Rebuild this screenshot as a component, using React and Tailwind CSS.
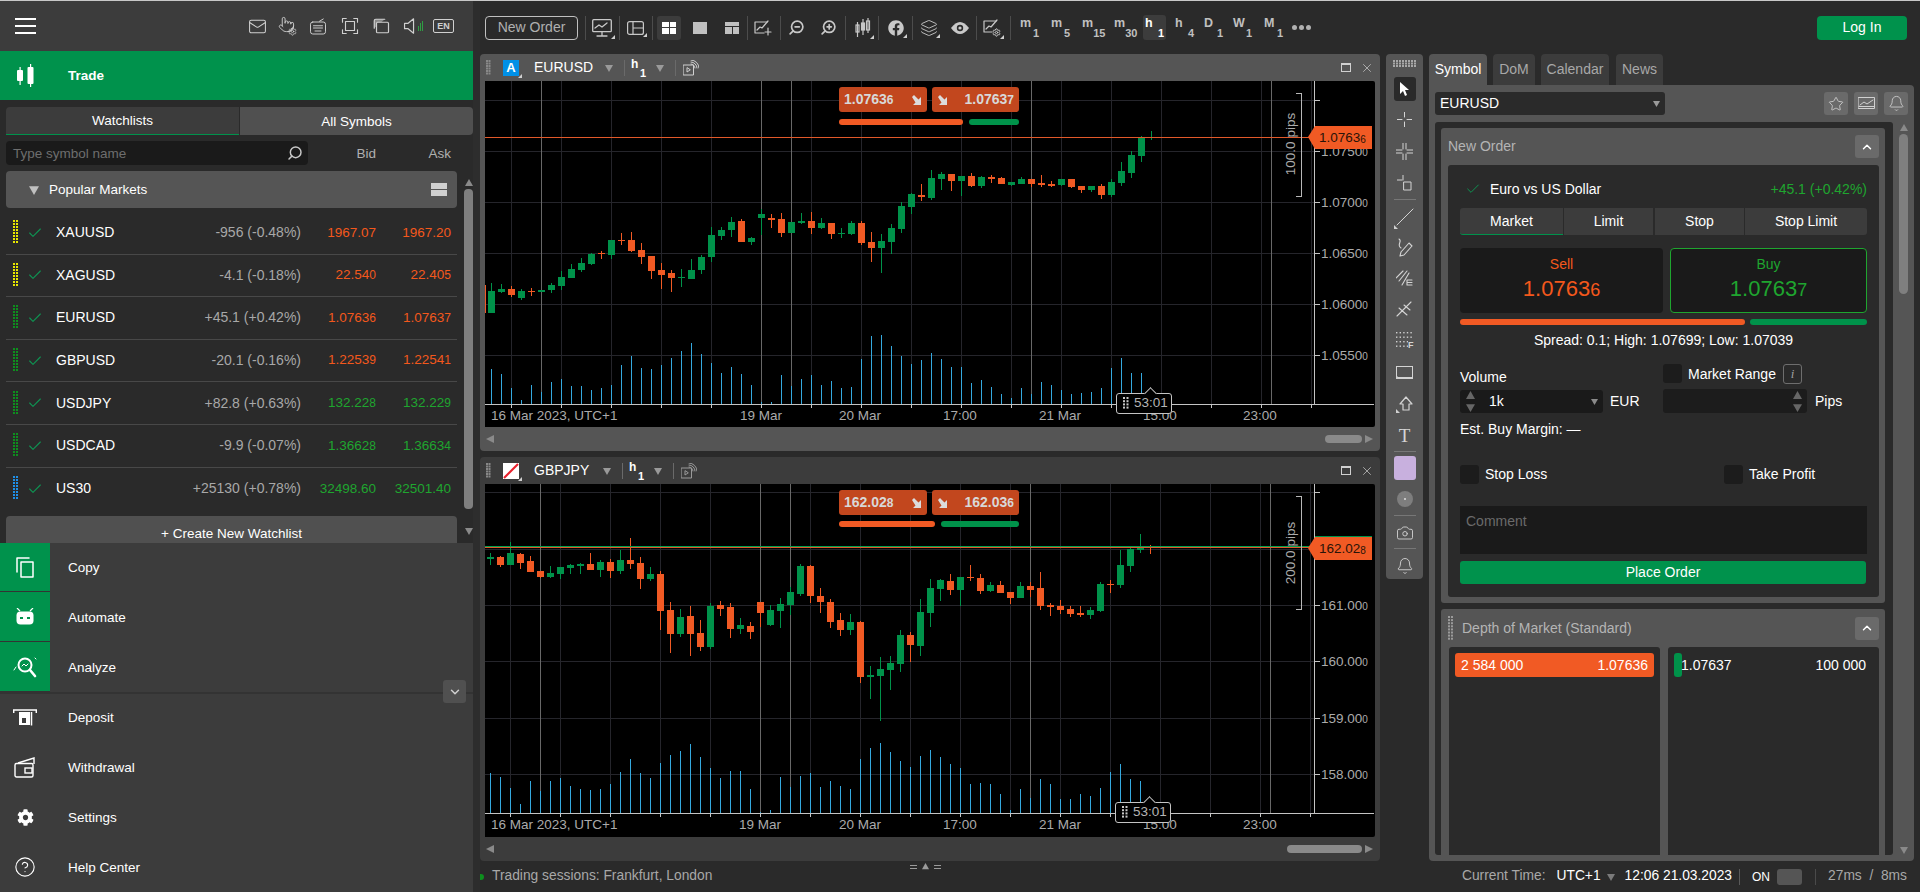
import React from "react";
import { Mail, Pointer, Settings, Search, ZoomIn, ZoomOut, Layers, Star, Bell, Camera, Check, ChevronUp, ChevronDown, CircleHelp, X } from "lucide-react";
import { FaFacebook, FaCog } from "react-icons/fa";

// watchlist rows
const rows = [
  { name: "XAUUSD", chg: "-956 (-0.48%)", bid: "1967.07", ask: "1967.20", dot: "#e6e600", up: false, plain: true },
  { name: "XAGUSD", chg: "-4.1 (-0.18%)", bid: "22.540", ask: "22.405", dot: "#e6e600", up: false },
  { name: "EURUSD", chg: "+45.1 (+0.42%)", bid: "1.07636", ask: "1.07637", dot: "#0e8f1e", up: false },
  { name: "GBPUSD", chg: "-20.1 (-0.16%)", bid: "1.22539", ask: "1.22541", dot: "#0e8f1e", up: false },
  { name: "USDJPY", chg: "+82.8 (+0.63%)", bid: "132.228", ask: "132.229", dot: "#0e8f1e", up: true },
  { name: "USDCAD", chg: "-9.9 (-0.07%)", bid: "1.36628", ask: "1.36634", dot: "#0e8f1e", up: true },
  { name: "US30", chg: "+25130 (+0.78%)", bid: "32498.60", ask: "32501.40", dot: "#1f8fe6", up: true, plain: true },
];

// candles: body top, body bottom, wick top, wick bottom, 1 = green (zoomed reference units)
const candlesA = [
  [723,789,699,789,1],[717,726,702,729,1],[717,735,708,741,0],[723,744,717,750,1],[723,726,714,738,0],[720,726,720,726,1],
  [705,720,699,729,1],[681,708,663,720,1],[657,684,642,684,1],[639,660,624,666,1],[612,642,609,645,1],[609,612,603,627,0],
  [570,615,570,627,1],[570,573,549,585,0],[570,603,546,606,0],[600,621,579,642,0],[618,663,618,687,0],[660,675,639,717,0],
  [669,684,660,726,0],[681,684,657,711,1],[660,687,627,687,1],[621,660,615,672,1],[555,621,531,636,1],[540,558,531,570,1],
  [516,540,501,561,1],[513,576,507,576,0],[564,576,561,585,1],[492,504,477,555,1],[504,510,492,534,0],[507,549,489,561,0],
  [516,549,516,549,1],[513,519,489,522,1],[513,534,486,552,0],[519,534,504,537,1],[519,552,519,567,0],[549,552,534,564,1],
  [519,552,513,555,1],[519,579,513,585,0],[576,594,546,636,0],[573,594,552,669,1],[534,576,522,612,1],[468,537,456,549,1],
  [432,471,429,492,1],[435,441,402,453,0],[384,444,360,450,1],[372,387,366,420,1],[372,393,372,423,0],[378,393,378,438,1],
  [378,408,369,411,0],[381,408,378,414,1],[381,387,375,399,0],[384,402,381,402,0],[396,405,396,408,1],[387,402,381,402,1],
  [387,402,387,411,0],[399,405,375,411,0],[402,408,393,411,0],[387,405,387,408,1],[387,411,387,414,0],[408,420,408,429,0],
  [408,420,408,426,1],[408,435,402,447,0],[396,435,387,441,1],[363,399,336,408,1],[315,369,303,384,1],[264,318,258,336,1],[243,243,243,270,1],
];
const volsA = [957,972,1014,1050,1005,1026,996,987,1008,1008,1020,1014,1005,945,918,954,957,945,924,903,879,912,939,969,951,972,1005,1056,1056,975,1008,987,975,1005,993,1014,1011,927,858,855,888,918,942,930,909,927,951,951,999,990,1011,1032,1044,1014,1032,996,1005,1020,1032,1029,1026,1014,954,924,969,969];

const candlesB = [
  [324,330,312,348,1],[324,348,321,354,0],[312,348,279,348,1],[315,342,312,360,0],[336,369,321,369,0],[366,384,366,387,0],
  [372,384,351,387,1],[354,375,354,390,1],[348,357,345,375,1],[345,351,342,375,1],[345,363,312,363,0],[339,363,333,384,1],
  [339,366,330,387,0],[333,366,303,375,1],[333,345,267,360,0],[342,390,324,420,0],[375,390,354,396,1],[375,486,366,543,0],
  [483,555,459,612,0],[504,555,480,564,1],[501,555,471,621,0],[552,594,513,606,0],[471,594,462,600,1],[468,480,456,501,0],
  [474,540,462,567,0],[528,540,507,555,1],[531,549,519,570,0],[459,492,459,534,0],[483,528,468,531,1],[465,486,447,537,1],
  [429,468,414,498,1],[351,435,345,441,1],[351,441,348,462,0],[441,459,417,492,0],[459,519,450,537,0],[513,543,492,561,0],
  [519,543,495,558,1],[519,684,516,702,0],[678,684,651,750,1],[660,681,624,816,1],[642,663,621,723,1],[558,645,543,669,1],
  [558,588,549,639,0],[489,591,450,621,1],[417,492,390,534,1],[393,420,390,456,1],[396,423,375,438,0],[384,423,384,471,1],
  [384,387,348,396,0],[387,426,375,435,0],[408,426,399,429,1],[408,432,396,432,0],[429,447,429,465,0],[411,447,399,447,1],
  [411,423,399,444,0],[417,471,369,483,0],[468,474,462,501,0],[471,483,453,495,0],[480,495,471,504,0],[492,498,471,504,0],
  [483,498,474,510,1],[405,486,399,489,1],[405,408,393,432,0],[348,408,303,417,1],[300,351,297,369,1],[297,303,255,312,1],[291,294,288,315,0],
];
const volsB = [972,984,1017,1065,996,1026,996,987,1011,1020,1023,1020,1005,969,930,972,987,942,918,906,885,924,957,987,966,966,1020,1089,1083,984,1014,981,972,1014,996,1011,1020,930,897,882,909,936,954,921,903,924,945,957,1005,1002,1005,1035,1083,1020,1047,990,1005,1050,1050,1035,1041,1017,969,945,990,996];

const Px = ({ v, small = "text-[12px]" }) => (
  <>
    {v.slice(0, -1)}
    <span className={small}>{v.slice(-1)}</span>
  </>
);

const Tri = ({ dir = "down", size = 8, color = "#8a8a8a", className = "" }) => {
  const pts = { down: "0,1 8,1 4,8", up: "0,7 8,7 4,0", left: "8,0 8,8 0,4", right: "0,0 0,8 8,4" };
  return (
    <svg width={size} height={size} viewBox="0 0 8 8" className={className}>
      <polygon points={pts[dir]} fill={color} />
    </svg>
  );
};

const Corner = () => (
  <svg width="4" height="4" viewBox="0 0 4 4" className="absolute right-[-3px] bottom-[-2px]">
    <polygon points="4,0 4,4 0,4" fill="#d0d0d0" />
  </svg>
);

const CornerL = () => (
  <svg width="4" height="4" viewBox="0 0 4 4" className="absolute left-[-1px] bottom-[-2px]">
    <polygon points="0,0 4,4 0,4" fill="#d0d0d0" />
  </svg>
);

const Sep = ({ className = "" }) => <div className={"w-px h-6 bg-[#4c4c4c] shrink-0 " + className} />;

const Draw = ({ w = 18, h = 18, vb = "0 0 24 24", sw = 1.5, className = "", children }) => (
  <svg width={w} height={h} viewBox={vb} fill="none" stroke="currentColor" strokeWidth={sw} strokeLinecap="round" strokeLinejoin="round" className={className}>
    {children}
  </svg>
);

const Dots = ({ color = "#8f8f8f", cols = 2, rows = 8, w = 6, h = 25, s = 2, gx = 3, gy = 3 }) => (
  <svg width={w} height={h} className="shrink-0">
    {Array.from({ length: rows }).map((_, r) =>
      Array.from({ length: cols }).map((_, c) => <rect key={r + "-" + c} x={c * gx} y={r * gy} width={s} height={s} fill={color} />)
    )}
  </svg>
);

const CandleIcon = ({ className = "" }) => (
  <svg width="17" height="23" viewBox="0 0 17 23" className={className} fill="currentColor">
    <rect x="0" y="6" width="6" height="11" rx="1" />
    <rect x="2.500" y="3" width="1.200" height="18" />
    <rect x="10.500" y="3" width="6" height="17" rx="1" />
    <rect x="13" y="0" width="1.200" height="23" />
  </svg>
);

function MenuRow({ label, green, children, h = "h-[50px]" }) {
  return (
    <div className={"flex items-center " + h}>
      <div className={"w-[50px] h-full flex items-center justify-center text-white " + (green ? "bg-[#00924c] border-b border-[#333]" : "")}>{children}</div>
      <span className="ml-[18px] mt-[2px] text-white text-[13.5px]">{label}</span>
    </div>
  );
}

function Sidebar() {
  return (
    <div className="w-[480px] shrink-0 flex bg-[#2d2d2d]">
      <div className="w-[473px] flex flex-col">
        <div className="h-[50px] bg-[#3c3c3c] flex items-center text-[#d0d0d0]">
          <div className="ml-[15px] w-[21px] flex flex-col gap-[5px]">
            <div className="h-[2px] bg-white" />
            <div className="h-[2px] bg-white" />
            <div className="h-[2px] bg-white" />
          </div>
          <Mail size={19} strokeWidth={1.3} className="ml-[212px]" />
          <div className="relative ml-[11px] w-[19px] h-[20px]">
            <Pointer size={17} strokeWidth={1.3} />
            <Settings size={9} strokeWidth={2} className="absolute right-0 bottom-0" />
          </div>
          <Draw w={18} h={19} className="ml-[12px]" sw={1.3}>
            <rect x="2" y="6" width="20" height="16" rx="3" />
            <path d="M6 11h12M6 14h12M8 18h8M14 5l5-3" />
          </Draw>
          <Draw w={18} h={18} className="ml-[14px]" sw={1.5}>
            <path d="M2 7V2h5M17 2h5v5M22 17v5h-5M7 22H2v-5" />
            <rect x="6" y="6" width="12" height="12" />
          </Draw>
          <Draw w={18} h={18} className="ml-[13px]" sw={1.6}>
            <path d="M3 15V5a2 2 0 0 1 2-2h12" fill="#888" />
            <rect x="6" y="7" width="16" height="14" rx="1.500" fill="#3c3c3c" />
          </Draw>
          <div className="ml-[13px] flex items-center">
            <Draw w={13} h={18} vb="0 0 13 20" sw={1.3}>
              <path d="M1 7h4l6-5v16l-6-5H1z" />
            </Draw>
            <div className="ml-[2px] flex items-end gap-px h-[10px]">
              <div className="w-px h-[5px] bg-[#2f9e44]" />
              <div className="w-px h-[8px] bg-[#2f9e44]" />
              <div className="w-px h-[10px] bg-[#2f9e44]" />
            </div>
          </div>
          <div className="ml-[10px] w-[21px] h-[14px] border border-[#d0d0d0] rounded-[2px] text-[9px] font-bold leading-none flex items-center justify-center">EN</div>
        </div>

        <div className="h-[49px] bg-[#00924c] flex items-center text-white">
          <CandleIcon className="ml-[17px]" />
          <span className="ml-[34px] mt-[2px] font-bold text-[13.5px]">Trade</span>
        </div>

        <div className="flex-1 bg-[#2a2a2a] overflow-hidden min-h-0 flex flex-col">
          <div className="ml-[6px] mt-[7px] flex h-[28px] text-[13.5px] text-white">
            <div className="w-[233px] pt-[2px] bg-[#3c3c3c] border-b border-[#00924c] rounded-tl-[4px] flex items-center justify-center">Watchlists</div>
            <div className="ml-[1px] pt-[2px] flex-1 bg-[#505050] rounded-r-[4px] flex items-center justify-center">All Symbols</div>
          </div>
          <div className="ml-[6px] mt-[6px] h-[24px] flex items-center text-[13.5px]">
            <div className="w-[302px] h-full bg-[#1a1a1a] rounded-[4px] flex items-center justify-between pl-[7px] pr-[5px]">
              <span className="text-[#6e6e6e] mt-[2px]">Type symbol name</span>
              <Search size={16} strokeWidth={2.2} className="text-[#c8c8c8] -scale-x-100" />
            </div>
            <span className="w-[68px] mt-[2px] text-right text-[#b0b0b0]">Bid</span>
            <span className="w-[75px] mt-[2px] text-right text-[#b0b0b0]">Ask</span>
          </div>
          <div className="ml-[6px] mt-[6px] flex flex-1 min-h-0">
            <div className="w-[451px] flex flex-col">
              <div className="h-[37px] shrink-0 bg-[#555] rounded-[4px] flex items-center text-white text-[13.5px]">
                <Tri size={10} color="#c0c0c0" className="ml-[23px]" />
                <span className="ml-[10px] mt-[2px]">Popular Markets</span>
                <div className="ml-auto mr-[10px] w-[16px] flex flex-col gap-px">
                  <div className="h-[6px] bg-[#d0d0d0]" />
                  <div className="h-[6px] bg-[#d0d0d0]" />
                </div>
              </div>
              <div className="mt-[4px]">
                {rows.map((r, i) => (
                  <div key={r.name} className={"h-[42.6px] flex items-center text-[13.5px] " + (i < rows.length - 1 ? "border-b border-[#484848]" : "")}>
                    <div className="ml-[7px]">
                      <Dots color={r.dot} />
                    </div>
                    <Check size={16} strokeWidth={1.7} className="ml-[8px] text-[#0f9252]" />
                    <span className="ml-[13px] text-white text-[14px]">{r.name}</span>
                    <span className="ml-auto text-[#a8a8a8] text-[14px]">{r.chg}</span>
                    <span className={"w-[75px] text-right " + (r.up ? "text-[#1fa52f]" : "text-[#f4581c]")}>{r.plain ? r.bid : <Px v={r.bid} />}</span>
                    <span className={"w-[75px] mr-[6px] text-right " + (r.up ? "text-[#1fa52f]" : "text-[#f4581c]")}>{r.plain ? r.ask : <Px v={r.ask} />}</span>
                  </div>
                ))}
              </div>
              <div className="mt-[6px] h-[30px] shrink-0 bg-[#505050] rounded-t-[4px] flex items-start pt-[8px] justify-center text-white text-[13.5px]">+ Create New Watchlist</div>
            </div>
            <div className="ml-[7px] w-[9px] flex flex-col items-center">
              <Tri dir="up" size={8} className="mt-[8px]" />
              <div className="mt-[2px] h-[320px] w-[9px] rounded-[4px] bg-[#7f7f7f]" />
              <Tri size={8} className="mt-[18px]" />
            </div>
          </div>
        </div>

        <div className="h-[349px] bg-[#3c3c3c] relative">
          <MenuRow label="Copy" green h="h-[49px]">
            <Draw w={18} h={21} vb="0 0 18 21" sw={1.5}>
              <path d="M1 15V1h12" />
              <rect x="5" y="5" width="12" height="15" />
            </Draw>
          </MenuRow>
          <MenuRow label="Automate" green>
            <svg width="18" height="17" viewBox="0 0 18 17" fill="currentColor">
              <path d="M1 0l3 3M17 0l-3 3" stroke="currentColor" strokeWidth="1.200" />
              <rect x="0.500" y="3.500" width="17" height="13" rx="4" />
              <rect x="4" y="9" width="3" height="2" fill="#00924c" />
              <rect x="11" y="9" width="3" height="2" fill="#00924c" />
            </svg>
          </MenuRow>
          <MenuRow label="Analyze" green>
            <Draw w={24} h={22} vb="0 0 24 22" sw={2}>
              <circle cx="12" cy="9" r="6.500" />
              <path d="M17 14l5 6" strokeWidth="2.600" />
              <path d="M9 10l2-2 2 2 2-2" strokeWidth="1" />
              <path d="M1 14l2-3M22 2l1 1" strokeWidth="1" />
            </Draw>
          </MenuRow>
          <div className="h-[2px] bg-[#333] -mb-[2px]" />
          <MenuRow label="Deposit">
            <svg width="24" height="17" viewBox="0 0 24 17" fill="none" stroke="currentColor" strokeWidth="1.500">
              <path d="M0.700 4V1h22.600v3" />
              <rect x="6" y="3" width="11" height="13" fill="currentColor" stroke="none" />
              <rect x="9" y="9" width="4" height="5" fill="#3c3c3c" stroke="none" />
              <path d="M18.500 3v13.500" />
            </svg>
          </MenuRow>
          <MenuRow label="Withdrawal">
            <svg width="22" height="22" viewBox="0 0 22 22" fill="none" stroke="currentColor" strokeWidth="1.400">
              <rect x="1" y="7.500" width="18" height="13.500" rx="1.500" />
              <rect x="11" y="12" width="7" height="5" />
              <path d="M4 7l16-5v6" />
            </svg>
          </MenuRow>
          <MenuRow label="Settings">
            <FaCog size={17} />
          </MenuRow>
          <MenuRow label="Help Center">
            <CircleHelp size={22} strokeWidth={1.2} />
          </MenuRow>
          <div className="absolute left-[443px] top-[137px] w-[23px] h-[23px] rounded-[3px] bg-[#505050] flex items-center justify-center text-[#d0d0d0]">
            <ChevronDown size={14} strokeWidth={2.5} />
          </div>
        </div>
      </div>
    </div>
  );
}

function TF({ a, b, ml, active }) {
  return (
    <div className={"w-[23px] h-[25px] rounded-[3px] px-[2px] flex justify-between font-bold text-[#c0c0c0] " + ml + (active ? " bg-[#3c3c3c]" : "")}>
      <span className={"text-[12.5px] leading-[17px] " + (active ? "text-white" : "")}>{a}</span>
      <span className={"self-end text-[11px] leading-[14px] " + (active ? "text-white" : "")}>{b}</span>
    </div>
  );
}

function Toolbar() {
  return (
    <div className="h-[53px] shrink-0 flex items-center text-[#c8c8c8]">
      <div className="ml-[5px] w-[93px] h-[24px] border border-[#c0c0c0] rounded-[4px] flex items-center justify-center text-[14px] text-[#b0b0b0]">New Order</div>
      <Sep className="ml-[7px]" />
      <div className="relative ml-[6px] w-[20px] h-[18px]">
        <Draw w={20} h={18} vb="0 0 20 18" sw={1.3}>
          <rect x="0.700" y="0.700" width="18.600" height="12" rx="1" />
          <path d="M3 9l4-3 3 2 5-4M10 13v3M5 17h10" />
        </Draw>
        <Corner />
      </div>
      <Sep className="ml-[7px]" />
      <div className="relative ml-[7px] w-[17px] h-[14px]">
        <Draw w={17} h={14} vb="0 0 17 14" sw={1.2}>
          <rect x="0.600" y="0.600" width="15.800" height="12.800" rx="2" />
          <path d="M6 1v12M6 7h10" />
        </Draw>
        <Corner />
      </div>
      <Sep className="ml-[8px]" />
      <div className="ml-[4px] w-[24px] h-[24px] rounded-[3px] bg-[#3c3c3c] flex items-center justify-center">
        <div className="w-[14px] h-[12px] grid grid-cols-2 grid-rows-2 gap-px">
          <div className="bg-white" />
          <div className="bg-white" />
          <div className="bg-white" />
          <div className="bg-white" />
        </div>
      </div>
      <div className="ml-[12px] w-[14px] h-[12px] bg-[#c0c0c0]" />
      <div className="ml-[18px] w-[14px] h-[12px] flex flex-col gap-px">
        <div className="h-[4px] bg-[#c0c0c0]" />
        <div className="flex-1 flex gap-px">
          <div className="flex-1 bg-[#c0c0c0]" />
          <div className="flex-1 bg-[#c0c0c0]" />
        </div>
      </div>
      <Sep className="ml-[8px]" />
      <Draw w={18} h={18} vb="0 0 18 18" sw={1.2} className="ml-[6px]">
        <path d="M10 14H1V3h12" />
        <path d="M3 11l3-3 2 1 6-7" />
        <path d="M14 9v7M11 13h6" />
      </Draw>
      <Sep className="ml-[8px]" />
      <ZoomOut size={17} strokeWidth={2.4} className="ml-[7px] -scale-x-100" />
      <ZoomIn size={17} strokeWidth={2.4} className="ml-[15px] -scale-x-100" />
      <Sep className="ml-[8px]" />
      <div className="relative ml-[9px] w-[16px] h-[19px]">
        <svg width="16" height="19" viewBox="0 0 16 19" fill="none" stroke="currentColor" strokeWidth="1.200">
          <rect x="1" y="7" width="3" height="7" fill="#2a2a2a" />
          <path d="M2.500 4v16" />
          <rect x="6.500" y="5" width="3" height="7" fill="currentColor" />
          <path d="M8 1v16" />
          <rect x="11.500" y="3" width="3" height="9" />
          <path d="M13 0v15" />
        </svg>
        <Corner />
      </div>
      <Sep className="ml-[7px]" />
      <div className="relative ml-[9px] w-[16px] h-[16px]">
        <FaFacebook size={16} />
        <Corner />
      </div>
      <Sep className="ml-[8px]" />
      <div className="relative ml-[7px] w-[17px] h-[17px]">
        <Layers size={18} strokeWidth={1.2} />
        <Corner />
      </div>
      <svg width="18" height="12" viewBox="0 0 18 12" className="ml-[14px]">
        <path d="M0 6c3-4 6-6 9-6s6 2 9 6c-3 4-6 6-9 6s-6-2-9-6z" fill="#c8c8c8" />
        <circle cx="9" cy="6" r="3.200" fill="#2a2a2a" />
        <circle cx="9" cy="6" r="1.600" fill="#c8c8c8" />
      </svg>
      <Sep className="ml-[7px]" />
      <div className="relative ml-[6px] w-[18px] h-[18px]">
        <Draw w={18} h={18} vb="0 0 18 18" sw={1.2}>
          <path d="M9 13H1V2h12" />
          <path d="M3 10l3-3 2 1 6-7" />
        </Draw>
        <Settings size={9} strokeWidth={2.6} className="absolute right-0 bottom-0" />
        <Corner />
      </div>
      <Sep className="ml-[9px]" />
      <TF a="m" b="1" ml="ml-[7px]" />
      <TF a="m" b="5" ml="ml-[8px]" />
      <TF a="m" b="15" ml="ml-[8px]" />
      <TF a="m" b="30" ml="ml-[9px]" />
      <TF a="h" b="1" ml="ml-[8px]" active />
      <TF a="h" b="4" ml="ml-[7px]" />
      <TF a="D" b="1" ml="ml-[6px]" />
      <TF a="W" b="1" ml="ml-[6px]" />
      <TF a="M" b="1" ml="ml-[8px]" />
      <div className="ml-[7px] flex gap-[2px]">
        <div className="w-[5px] h-[5px] rounded-full bg-[#b0b0b0]" />
        <div className="w-[5px] h-[5px] rounded-full bg-[#b0b0b0]" />
        <div className="w-[5px] h-[5px] rounded-full bg-[#b0b0b0]" />
      </div>
      <div className="ml-auto mr-[13px] w-[90px] h-[24px] rounded-[4px] bg-[#00924c] text-white text-[14px] flex items-center justify-center">Log In</div>
    </div>
  );
}

const GRID = "#25252b";
const AXIS = "#c4c4c4";
const GREEN = "#00924a";
const ORANGE = "#f15a24";

function Plot({ cfg }) {
  const { candles, vols, x0, dy, hLines, vStart, sessions, priceY, tagText, tagSmall, labels, xLabels, axisY, bracket, pips, lines, h } = cfg;
  const vGrid = Array.from({ length: 17 }, (_, i) => vStart + i * 50);
  return (
    <svg width="889" height={h} className="block" shapeRendering="crispEdges">
      {hLines.map((y) => (
        <rect key={y} x="0" y={y} width="835" height="1" fill={GRID} />
      ))}
      {vGrid.map((x) => (
        <g key={x}>
          <rect x={x} y="0" width="1" height={axisY} fill={GRID} />
          <rect x={x} y={axisY} width="1" height="4" fill={AXIS} />
        </g>
      ))}
      {sessions.map((x) => (
        <rect key={x} x={x} y="0" width="1" height={axisY} fill="#686868" />
      ))}
      {hLines.map((y) => (
        <rect key={y} x="829" y={y} width="6" height="1" fill={AXIS} />
      ))}
      {cfg.edge && <rect x="0" y="204" width="1" height="28" fill={ORANGE} />}
      {vols.map((z, i) => (
        <rect key={i} x={x0 + 3 + i * 10} y={z / 3 + dy} width="1" height={axisY - (z / 3 + dy)} fill="#35a9df" />
      ))}
      {candles.map((c, i) => {
        const col = c[4] ? GREEN : ORANGE;
        return (
          <g key={i}>
            <rect x={x0 + 3 + i * 10} y={c[2] / 3 + dy} width="1" height={(c[3] - c[2]) / 3} fill={col} />
            {c[1] > c[0] && <rect x={x0 + i * 10} y={c[0] / 3 + dy} width="7" height={Math.max((c[1] - c[0]) / 3, 1)} fill={col} />}
          </g>
        );
      })}
      <rect x="0" y={axisY} width="889" height="1" fill={AXIS} />
      <rect x="829" y="0" width="1" height={axisY} fill={AXIS} />
      {lines.map((l) => (
        <rect key={l.y} x="0" y={l.y} width="830" height={l.h} fill={l.c} />
      ))}
      <g shapeRendering="auto" fill="#ababab" fontSize="13.5">
        {labels.map((l) => (
          <text key={l.t} x="836" y={l.y + 5}>
            {l.t}
            <tspan fontSize="10">0</tspan>
          </text>
        ))}
        {xLabels.map((l) => (
          <text key={l.t} x={l.x} y={axisY + 16} textAnchor={l.a || "middle"}>
            {l.t}
          </text>
        ))}
        <text transform={`translate(${pips.x},${pips.y}) rotate(-90)`} textAnchor="middle" fontSize="13.5">
          {pips.t}
        </text>
      </g>
      <path d={bracket} fill="none" stroke="#b8b8b8" strokeWidth="1" />
      <g shapeRendering="auto">
        <polygon points={`823,${priceY} 830,${priceY - 11} 887,${priceY - 11} 887,${priceY + 12} 830,${priceY + 12}`} fill={ORANGE} />
        {cfg.tagTop && <rect x="830" y={priceY - 12} width="57" height="1" fill={GREEN} />}
        <text x="834" y={priceY + 5} fontSize="13.5" fill="#2a1408">
          {tagText}
          <tspan fontSize="10" dy="1">{tagSmall}</tspan>
        </text>
      </g>
    </svg>
  );
}

const QuoteArrow = ({ className = "" }) => (
  <svg width="10" height="10" viewBox="0 0 10 10" className={className} fill="#dcdcdc">
    <path d="M0 2l2-2 4.500 4.500L9 2v8H1l2.500-2.500z" />
  </svg>
);

function ChartPanel({ active, sym, icon, cfg, h, thumb, triX, top }) {
  return (
    <div className={"rounded-[4px] flex flex-col shrink-0 " + h + " " + (active ? "bg-[#555]" : "bg-[#3c3c3c]")}>
      <div className="h-[27px] shrink-0 flex items-center relative">
        <div className="ml-[6px]">
          <Dots color="#888" rows={6} w={5} h={15} s={2} gx={2.5} gy={2.5} />
        </div>
        <div className="relative ml-[12px]">
          {icon}
          <Corner />
        </div>
        <span className="ml-[15px] text-white text-[14px] w-[58px]">{sym}</span>
        <Tri size={8} color="#9a9a9a" className={triX} />
        <div className="ml-[11px] w-px h-[16px] bg-[#6a6a6a]" />
        <div className="ml-[6px] w-[15px] h-[22px] flex justify-between font-bold text-white">
          <span className="text-[12px] leading-[14px]">h</span>
          <span className="self-end text-[11px] leading-[12px]">1</span>
        </div>
        <Tri size={8} color="#9a9a9a" className="ml-[10px]" />
        <div className="ml-[11px] w-px h-[16px] bg-[#6a6a6a]" />
        <Draw w={16} h={16} vb="0 0 16 16" sw={1} className={"ml-[7px] " + (active ? "text-[#d0d0d0]" : "text-[#9a9a9a]")}>
          <rect x="0.500" y="5" width="10" height="10" />
          <path d="M4 8v4l3-2z" />
          <path d="M8 2a6 6 0 0 1 6 6M8 0a8 8 0 0 1 8 8M8 4a4 4 0 0 1 4 4" />
        </Draw>
        <div className="ml-auto mr-[6px] flex items-center gap-[9px]">
          <div className="w-[10px] h-[9px] border border-[#d0d0d0] border-t-2" />
          <X size={14} strokeWidth={1.2} className="text-[#d0d0d0]" />
        </div>
      </div>
      <div className="relative mx-[5px] flex-1 bg-black rounded-r-[2px] overflow-hidden min-h-0">
        <Plot cfg={cfg} />
        <div className={"absolute left-[354px] w-[88px] h-[25px] rounded-[3px] bg-[#c2471e] text-[#d8d8d8] font-bold text-[14px] flex items-center pl-[5px] " + top}>
          <span>
            <Px v={cfg.sell} />
          </span>
          <QuoteArrow className="ml-auto mr-[5px]" />
        </div>
        <div className={"absolute left-[447px] w-[87px] h-[25px] rounded-[3px] bg-[#c2471e] text-[#d8d8d8] font-bold text-[14px] flex items-center pr-[5px] " + top}>
          <QuoteArrow className="ml-[6px]" />
          <span className="ml-auto">
            <Px v={cfg.buy} />
          </span>
        </div>
        <div className={"absolute left-[354px] w-[180px] h-[6px] flex gap-[6px] " + cfg.barTop}>
          <div className={"rounded-full bg-[#f15a24] " + cfg.sellW} />
          <div className="flex-1 rounded-full bg-[#00924a]" />
        </div>
        <div className={"absolute w-[56px] h-[21px] bg-black border border-[#c4c4c4] rounded-[3px] text-[#b4b4b4] text-[13.5px] flex items-center " + cfg.timer}>
          <div className="ml-[6px] mr-[5px]">
            <Dots color="#c8c8c8" rows={4} w={6} h={13} s={2} gx={3.5} gy={3.2} />
          </div>
          53:01
          <div className="absolute left-[29px] top-[-5px] w-[9px] h-[9px] rotate-45 bg-black border-l border-t border-[#c4c4c4]" />
        </div>
      </div>
      <div className="h-[24px] shrink-0 flex items-center">
        <Tri dir="left" size={8} className="ml-[6px]" />
        <div className={"ml-auto h-[8px] rounded-full bg-[#8a8a8a] " + thumb} />
        <Tri dir="right" size={8} className="ml-[3px] mr-[7px]" />
      </div>
    </div>
  );
}

const cfgA = {
  candles: candlesA, vols: volsA, x0: 3, dy: -31, h: 346, axisY: 323,
  hLines: [19, 70, 121, 172, 223, 274], vStart: 26, sessions: [56, 276, 306, 546, 786], edge: true,
  priceY: 56, tagText: "1.0763", tagSmall: "6",
  lines: [{ y: 56, h: 1, c: "#e2592a" }],
  labels: [{ t: "1.0750", y: 70 }, { t: "1.0700", y: 121 }, { t: "1.0650", y: 172 }, { t: "1.0600", y: 223 }, { t: "1.0550", y: 274 }],
  xLabels: [
    { t: "16 Mar 2023, UTC+1", x: 6, a: "start" }, { t: "19 Mar", x: 276 }, { t: "20 Mar", x: 375 }, { t: "17:00", x: 475 },
    { t: "21 Mar", x: 575 }, { t: "15:00", x: 675 }, { t: "23:00", x: 775 },
  ],
  bracket: "M811 12.500h5.500v102.500h-5.500", pips: { t: "100.0 pips", x: 810, y: 63 },
  sell: "1.07636", buy: "1.07637", sellW: "w-[124px]", barTop: "top-[38px]", timer: "left-[631px] top-[312px]",
};

const cfgB = {
  candles: candlesB, vols: volsB, x0: 2, dy: -35, h: 352, axisY: 329,
  hLines: [8, 65, 121, 177, 234, 290], vStart: 25, sessions: [55, 275, 305, 545, 785],
  priceY: 64, tagText: "162.02", tagSmall: "8", tagTop: true,
  lines: [{ y: 62, h: 1, c: "#00a050" }, { y: 63, h: 1, c: "#e2592a" }],
  labels: [{ t: "161.00", y: 121 }, { t: "160.00", y: 177 }, { t: "159.00", y: 234 }, { t: "158.00", y: 290 }],
  xLabels: [
    { t: "16 Mar 2023, UTC+1", x: 6, a: "start" }, { t: "19 Mar", x: 275 }, { t: "20 Mar", x: 375 }, { t: "17:00", x: 475 },
    { t: "21 Mar", x: 575 }, { t: "15:00", x: 675 }, { t: "23:00", x: 775 },
  ],
  bracket: "M811 12.500h5.500v113h-5.500", pips: { t: "200.0 pips", x: 810, y: 69 },
  sell: "162.028", buy: "162.036", sellW: "w-[96px]", barTop: "top-[37px]", timer: "left-[630px] top-[318px]",
};

function ToolRail() {
  return (
    <div className="ml-[6px] w-[37px] h-[525px] shrink-0 bg-[#555] rounded-[4px] flex flex-col items-center text-[#d4d4d4]">
      <div className="mt-[6px]">
        <Dots color="#a8a8a8" cols={8} rows={3} w={24} h={7} s={2} gx={3} gy={2.5} />
      </div>
      <div className="mt-[10px] w-[22px] h-[24px] rounded-[3px] bg-[#2a2a2a] flex items-center justify-center">
        <svg width="11" height="14" viewBox="0 0 11 14" fill="#fff">
          <path d="M1 0l9 8H6l2 5-2 1-2-5-3 3z" />
        </svg>
      </div>
      <Draw w={15} h={15} vb="0 0 15 15" sw={1} className="mt-[11px]">
        <path d="M7.500 0v5M7.500 10v5M0 7.500h5M10 7.500h5" />
      </Draw>
      <Draw w={17} h={17} vb="0 0 17 17" sw={1} className="mt-[16px]">
        <path d="M7 0v6M10 0v6M7 11v6M10 11v6M0 7h6M0 10h6M11 7h6M11 10h6" />
      </Draw>
      <Draw w={15} h={16} vb="0 0 15 16" sw={1} className="mt-[15px]">
        <path d="M6 0v5M0 5h5" />
        <rect x="7" y="7" width="7" height="8" />
      </Draw>
      <div className="mt-[8px] w-[22px] h-px bg-[#777]" />
      <div className="relative mt-[8px] w-[19px] h-[19px]">
        <Draw w={19} h={19} vb="0 0 19 19" sw={1}>
          <path d="M2 17L18 1" />
        </Draw>
        <CornerL />
      </div>
      <Draw w={16} h={19} vb="0 0 16 19" sw={1.1} className="mt-[11px]">
        <path d="M2 1c4 2-3 6 2 9" />
        <path d="M12 5l3 3-8 9-4 1 1-4z" />
      </Draw>
      <Draw w={17} h={17} vb="0 0 17 17" sw={1.1} className="mt-[12px]">
        <path d="M0 9l7-7M3 12l8-10M6 16l7-12" />
        <path d="M11 11h5M11 13.500h5M11 16h5M11 11v5" />
      </Draw>
      <Draw w={17} h={17} vb="0 0 17 17" sw={1.1} className="mt-[14px]">
        <path d="M1 16l6-6M6 11l9-9M3 8l8 7M8 5l6 5" />
      </Draw>
      <div className="relative mt-[15px] w-[18px] h-[18px]">
        <Dots color="#d0d0d0" cols={5} rows={4} w={18} h={16} s={1.4} gx={3.6} gy={4.5} />
        <span className="absolute right-0 bottom-0 bg-[#555] text-[9px] font-bold leading-none">F</span>
      </div>
      <div className="relative mt-[16px] w-[17px] h-[13px] border-[1.5px] border-[#d4d4d4] border-b-2">
        <CornerL />
      </div>
      <div className="relative mt-[17px] w-[16px] h-[15px]">
        <Draw w={14} h={15} vb="0 0 14 15" sw={1.2} className="ml-[2px]">
          <path d="M7 1l6 7H10v6H4V8H1z" />
        </Draw>
        <CornerL />
      </div>
      <span className="mt-[14px] text-[19px] leading-[22px] font-['Liberation_Serif',serif]">T</span>
      <div className="mt-[4px] w-[22px] h-px bg-[#777]" />
      <div className="mt-[4px] w-[22px] h-[24px] rounded-[3px] bg-[#c8b0de]" />
      <div className="relative mt-[11px] w-[16px] h-[16px] rounded-full bg-[#7e7e7e] flex items-center justify-center">
        <div className="w-[2px] h-[2px] rounded-full bg-[#ddd]" />
      </div>
      <div className="mt-[8px] w-[22px] h-px bg-[#777]" />
      <Camera size={18} strokeWidth={1.2} className="mt-[8px]" />
      <div className="mt-[6px] w-[22px] h-px bg-[#777]" />
      <Bell size={18} strokeWidth={1.2} className="mt-[8px]" />
    </div>
  );
}

const Spin = ({ className = "" }) => (
  <div className={"flex flex-col gap-[3px] " + className}>
    <Tri dir="up" size={9} color="#666" />
    <Tri size={9} color="#666" />
  </div>
);

const Box = ({ className = "" }) => <div className={"w-[19px] h-[19px] rounded-[3px] bg-[#1c1c1c] shrink-0 " + className} />;

const CollapseBtn = () => (
  <div className="w-[24px] h-[23px] rounded-[3px] bg-[#6a6a6a] flex items-center justify-center text-white">
    <ChevronUp size={14} strokeWidth={2.5} />
  </div>
);

function OrderPanel() {
  return (
    <div className="ml-[6px] w-[485px] shrink-0 flex flex-col text-[14px] whitespace-nowrap">
      <div className="h-[31px] flex gap-[6px] text-[#a8a8a8] shrink-0">
        <div className="w-[58px] bg-[#555] rounded-t-[4px] flex items-center justify-center text-white">Symbol</div>
        <div className="w-[42px] bg-[#3c3c3c] rounded-t-[4px] flex items-center justify-center">DoM</div>
        <div className="w-[68px] bg-[#3c3c3c] rounded-t-[4px] flex items-center justify-center">Calendar</div>
        <div className="ml-[1px] w-[47px] bg-[#3c3c3c] rounded-t-[4px] flex items-center justify-center">News</div>
      </div>
      <div className="flex-1 bg-[#555] rounded-b-[4px] rounded-tr-[4px] px-[6px] pt-[7px] pb-[6px] flex flex-col min-h-0">
        <div className="h-[23px] flex items-center shrink-0 text-[#d0d0d0]">
          <div className="w-[230px] h-full bg-[#2a2a2a] rounded-[3px] flex items-center justify-between pl-[5px] pr-[5px] text-white text-[14px]">
            EURUSD
            <Tri size={7} color="#9a9a9a" />
          </div>
          <div className="ml-auto w-[24px] h-full rounded-[3px] bg-[#6a6a6a] flex items-center justify-center">
            <Star size={16} strokeWidth={1.3} />
          </div>
          <div className="ml-[6px] w-[24px] h-full rounded-[3px] bg-[#6a6a6a] flex items-center justify-center">
            <Draw w={17} h={13} vb="0 0 17 13" sw={1}>
              <rect x="0.500" y="0.500" width="16" height="11" />
              <path d="M2 8l4-3 3 2 6-4M1 9.500h15" />
            </Draw>
          </div>
          <div className="ml-[6px] w-[24px] h-full rounded-[3px] bg-[#6a6a6a] flex items-center justify-center">
            <Bell size={17} strokeWidth={1.2} />
          </div>
        </div>
        <div className="mt-[7px] flex flex-1 min-h-0">
          <div className="w-[458px] bg-[#2a2a2a] rounded-[3px] overflow-hidden p-[6px] pr-[8px]">
            <div className="bg-[#555] rounded-[3px] h-[475px] pl-[7px] pr-[6px] flex flex-col">
              <div className="h-[37px] flex items-center justify-between shrink-0 text-[#b4b4b4]">
                New Order
                <CollapseBtn />
              </div>
              <div className="h-[432px] bg-[#2a2a2a] rounded-[3px] px-[12px] text-white">
                <div className="pt-[15px] h-[33px] flex items-center">
                  <Check size={16} strokeWidth={1.5} className="ml-[5px] text-[#0f9252]" />
                  <span className="ml-[9px]">Euro vs US Dollar</span>
                  <span className="ml-auto text-[#1fa52f]">+45.1 (+0.42%)</span>
                </div>
                <div className="mt-[10px] h-[27px] flex gap-[1px] text-center">
                  <div className="w-[103px] bg-[#3c3c3c] border-b border-[#00924c] rounded-l-[3px] flex items-center justify-center">Market</div>
                  <div className="w-[89px] bg-[#3c3c3c] flex items-center justify-center">Limit</div>
                  <div className="ml-[1px] w-[89px] bg-[#3c3c3c] flex items-center justify-center">Stop</div>
                  <div className="flex-1 bg-[#3c3c3c] rounded-r-[3px] flex items-center justify-center">Stop Limit</div>
                </div>
                <div className="mt-[13px] h-[65px] flex gap-[7px]">
                  <div className="w-[203px] bg-[#1a1a1a] rounded-[4px] flex flex-col items-center pt-[7px]">
                    <span className="text-[#f4581c] text-[14px] leading-[18px]">Sell</span>
                    <span className="text-[#f4581c] text-[22px] leading-[26px] mt-[3px]">
                      <Px v="1.07636" small="text-[18px]" />
                    </span>
                  </div>
                  <div className="flex-1 bg-[#1a1a1a] border border-[#1fa52f] rounded-[4px] flex flex-col items-center pt-[6px]">
                    <span className="text-[#1fa52f] text-[14px] leading-[18px]">Buy</span>
                    <span className="text-[#1fa52f] text-[22px] leading-[26px] mt-[3px]">
                      <Px v="1.07637" small="text-[18px]" />
                    </span>
                  </div>
                </div>
                <div className="mt-[6px] h-[6px] flex gap-[5px]">
                  <div className="w-[285px] rounded-full bg-[#f15a24]" />
                  <div className="flex-1 rounded-full bg-[#00924a]" />
                </div>
                <div className="mt-[6px] h-[18px] leading-[18px] text-center">Spread: 0.1; High: 1.07699; Low: 1.07039</div>
                <div className="mt-[15px] h-[49px] flex">
                  <div className="w-[203px] flex flex-col">
                    <span className="mt-[5px] h-[16px] leading-[16px]">Volume</span>
                    <div className="mt-[5px] h-[23px] flex items-center">
                      <div className="w-[143px] h-full bg-[#1a1a1a] rounded-[3px] flex items-center">
                        <Spin className="ml-[6px]" />
                        <span className="ml-[14px]">1k</span>
                        <Tri size={7} color="#8a8a8a" className="ml-auto mr-[5px]" />
                      </div>
                      <span className="ml-[7px]">EUR</span>
                    </div>
                  </div>
                  <div className="flex flex-col">
                    <div className="h-[19px] flex items-center">
                      <Box />
                      <span className="ml-[6px] mt-[2px]">Market Range</span>
                      <div className="ml-[7px] w-[19px] h-[20px] rounded-[3px] border border-[#6e6e6e] flex items-center justify-center text-[#a0a0a0] text-[13px] italic font-['Liberation_Serif',serif]">i</div>
                    </div>
                    <div className="mt-[6px] h-[24px] flex items-center">
                      <div className="w-[144px] h-full bg-[#1c1c1c] rounded-[3px] flex items-center justify-end pr-[5px]">
                        <Spin />
                      </div>
                      <span className="ml-[8px]">Pips</span>
                    </div>
                  </div>
                </div>
                <div className="mt-[7px] h-[18px] leading-[18px]">Est. Buy Margin: —</div>
                <div className="mt-[27px] h-[19px] flex items-center">
                  <div className="w-[264px] flex items-center">
                    <Box />
                    <span className="ml-[6px]">Stop Loss</span>
                  </div>
                  <Box />
                  <span className="ml-[6px]">Take Profit</span>
                </div>
                <div className="mt-[22px] h-[48px] bg-[#1a1a1a] pl-[6px] pt-[5px] text-[#6a6a6a]">Comment</div>
                <div className="mt-[7px] h-[23px] w-[406px] rounded-[3px] bg-[#00924c] flex items-center justify-center">Place Order</div>
              </div>
            </div>
            <div className="mt-[6px] bg-[#555] rounded-[3px] h-[300px] pl-[8px] pr-[6px]">
              <div className="h-[38px] flex items-center justify-between text-[#b4b4b4]">
                <div className="flex items-center -ml-[1px]">
                  <Dots color="#9a9a9a" rows={8} w={6} h={25} s={2} gx={3} gy={3.1} />
                  <span className="ml-[8px]">Depth of Market (Standard)</span>
                </div>
                <CollapseBtn />
              </div>
              <div className="flex gap-[8px] text-white">
                <div className="w-[211px] h-[240px] bg-[#2a2a2a] rounded-[3px] p-[6px]">
                  <div className="h-[24px] rounded-[3px] bg-[#f15a24] flex items-center justify-between px-[6px]">
                    <span>2 584 000</span>
                    <span>1.07636</span>
                  </div>
                </div>
                <div className="w-[211px] h-[240px] bg-[#2a2a2a] rounded-[3px] p-[6px]">
                  <div className="relative h-[24px] flex items-center justify-between pl-[7px] pr-[7px]">
                    <div className="absolute left-0 top-0 w-[8px] h-[24px] rounded-[3px] bg-[#00924a]" />
                    <span className="relative">1.07637</span>
                    <span>100 000</span>
                  </div>
                </div>
              </div>
            </div>
          </div>
          <div className="ml-[6px] w-[9px] flex flex-col items-center">
            <Tri dir="up" size={8} color="#8a8a8a" className="mt-[2px]" />
            <div className="mt-[2px] w-[9px] h-[160px] rounded-full bg-[#7f7f7f]" />
            <Tri size={8} color="#8a8a8a" className="mt-auto mb-[1px]" />
          </div>
        </div>
      </div>
    </div>
  );
}

function StatusBar() {
  return (
    <div className="h-[31px] shrink-0 flex items-center text-[13.8px] text-[#a8a8a8] relative">
      <div className="w-[4px] h-[6px] rounded-r-full bg-[#0e8f1e]" />
      <span className="ml-[8px]">Trading sessions: Frankfurt, London</span>
      <div className="absolute left-[430px] top-[2px] flex items-center gap-[5px]">
        <div className="w-[7px] h-[4px] border-y border-[#9a9a9a]" />
        <Tri dir="up" size={7} color="#9a9a9a" />
        <div className="w-[7px] h-[4px] border-y border-[#9a9a9a]" />
      </div>
      <span className="ml-auto">Current Time:</span>
      <span className="ml-[11px] text-white">UTC+1</span>
      <Tri size={8} color="#7a7a7a" className="ml-[6px]" />
      <span className="ml-[10px] text-white">12:06 21.03.2023</span>
      <div className="ml-[7px] w-px h-[16px] bg-[#5a5a5a]" />
      <span className="ml-[12px] text-[12px] text-white">ON</span>
      <div className="ml-[7px] w-[25px] h-[16px] rounded-[3px] bg-[#555]" />
      <div className="ml-[13px] w-px h-[16px] bg-[#4a4a4a]" />
      <span className="ml-[12px] mr-[13px]">27ms&nbsp;&nbsp;/&nbsp;&nbsp;8ms</span>
    </div>
  );
}

const InstrA = <div className="w-[16px] h-[16px] bg-[#0090e6] text-white text-[13px] font-bold flex items-center justify-center">A</div>;
const InstrB = (
  <svg width="16" height="16" viewBox="0 0 16 16" className="block">
    <rect width="16" height="16" fill="#fff" />
    <path d="M1 15L15 1" stroke="#e8202c" strokeWidth="2.200" />
  </svg>
);

export default function App() {
  return (
    <div className="w-[1920px] h-[892px] overflow-hidden bg-[#2a2a2a] flex flex-col font-['Liberation_Sans',Arial,sans-serif]">
      <div className="h-px bg-[#c8c8c8] shrink-0" />
      <div className="flex flex-1 min-h-0">
        <Sidebar />
        <div className="w-[1440px] flex flex-col">
          <Toolbar />
          <div className="flex h-[807px]">
            <div className="w-[900px] shrink-0 flex flex-col gap-[6px]">
              <ChartPanel active sym="EURUSD" icon={InstrA} cfg={cfgA} h="h-[397px]" thumb="w-[37px]" triX="ml-[13px]" top="top-[6px]" />
              <ChartPanel sym="GBPJPY" icon={InstrB} cfg={cfgB} h="h-[404px]" thumb="w-[75px]" triX="ml-[11px]" top="top-[6px]" />
            </div>
            <ToolRail />
            <OrderPanel />
          </div>
          <StatusBar />
        </div>
      </div>
    </div>
  );
}
